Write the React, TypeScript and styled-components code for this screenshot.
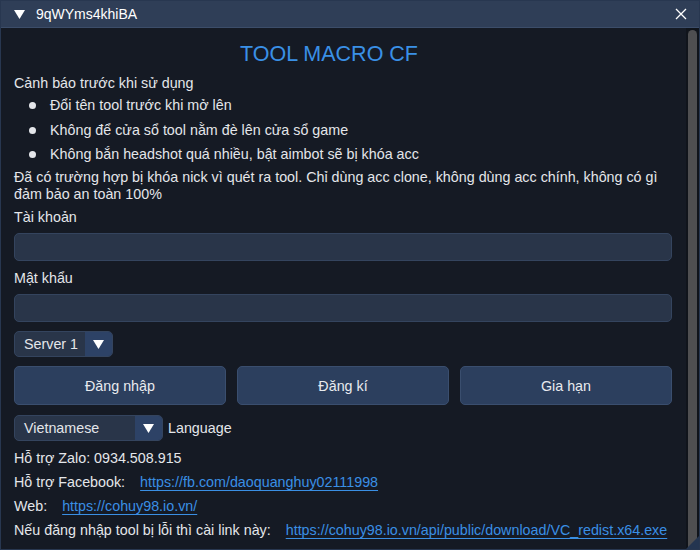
import React from "react";
import styled, { createGlobalStyle } from "styled-components";

const Global = createGlobalStyle`
  html, body {
    margin: 0;
    padding: 0;
    background: #151a24;
  }
  * {
    box-sizing: border-box;
  }
`;

const Window = styled.div`
  position: relative;
  width: 700px;
  height: 550px;
  display: flex;
  flex-direction: column;
  background: #151a24;
  border: 1px solid #283750;
  overflow: hidden;
  font-family: "Liberation Sans", Arial, sans-serif;
  font-size: 14.3px;
  color: #e4e6ea;
`;

const TitleBar = styled.div`
  height: 27px;
  flex: none;
  display: flex;
  align-items: center;
  gap: 11px;
  padding: 0 12px 0 13px;
  background: #2f3e57;
  border-bottom: 1px solid #3c4d69;
  color: #ffffff;
  font-size: 14px;
`;

const TitleText = styled.div`
  flex: 1;
`;

const Body = styled.div`
  flex: 1;
  display: flex;
  min-height: 0;
`;

const Content = styled.div`
  flex: 1;
  display: flex;
  flex-direction: column;
  padding: 13px 14px 0 13px;
`;

const ScrollTrack = styled.div`
  width: 13px;
  flex: none;
  background: #10141b;
  padding: 2px 2px 0 2px;
`;

const ScrollThumb = styled.div`
  height: 100%;
  border-radius: 5px 5px 0 0;
  background: #4f4f51;
`;

const Heading = styled.div`
  padding-left: 226px;
  font-size: 21.5px;
  line-height: 26px;
  color: #3a90e6;
  margin-bottom: 8px;
`;

const Line = styled.div<{ mt?: number }>`
  line-height: 16px;
  margin-top: ${(p) => p.mt ?? 0}px;
  white-space: nowrap;
`;

const Para = styled.div<{ mt?: number }>`
  line-height: 17px;
  margin-top: ${(p) => p.mt ?? 0}px;
`;

const BulletList = styled.ul`
  list-style: none;
  margin: 0;
  padding: 0;
`;

const Bullet = styled.li<{ mt: number }>`
  position: relative;
  padding-left: 36px;
  line-height: 16px;
  margin-top: ${(p) => p.mt}px;
  &::before {
    content: "";
    position: absolute;
    left: 15px;
    top: 5px;
    width: 7px;
    height: 7px;
    border-radius: 50%;
    background: #e4e6ea;
  }
`;

const Input = styled.div<{ mt: number; h: number }>`
  height: ${(p) => p.h}px;
  margin-top: ${(p) => p.mt}px;
  background: #293549;
  border: 1px solid #34445e;
  border-radius: 5px;
`;

const Combo = styled.div<{ w: number; mt: number }>`
  width: ${(p) => p.w}px;
  height: 26px;
  margin-top: ${(p) => p.mt}px;
  display: flex;
  border: 1px solid #34445e;
  border-radius: 5px;
  overflow: hidden;
  background: #293549;
`;

const ComboValue = styled.div`
  flex: 1;
  padding-left: 9px;
  line-height: 24px;
`;

const ComboArrow = styled.div`
  width: 27px;
  display: flex;
  align-items: center;
  justify-content: center;
  background: #2d4266;
`;

const Row = styled.div<{ mt: number }>`
  display: flex;
  align-items: center;
  gap: 5px;
  margin-top: ${(p) => p.mt}px;
`;

const ButtonRow = styled.div`
  display: grid;
  grid-template-columns: repeat(3, 1fr);
  gap: 11px;
  margin-top: 9px;
`;

const Button = styled.div`
  height: 39px;
  display: flex;
  align-items: center;
  justify-content: center;
  background: #2c3f5e;
  border: 1px solid #3a4e6e;
  border-radius: 5px;
  color: #e8eaee;
`;

const LinkLine = styled.div<{ mt: number }>`
  display: flex;
  gap: 15px;
  line-height: 16px;
  margin-top: ${(p) => p.mt}px;
  white-space: nowrap;
`;

const Link = styled.span`
  color: #3a8fe4;
  text-decoration: underline;
  text-underline-offset: 3px;
`;

const Grip = styled.div`
  position: absolute;
  right: 0;
  bottom: 0;
  width: 0;
  height: 0;
  border-left: 13px solid transparent;
  border-bottom: 13px solid #243550;
`;

const Arrow = () => (
  <svg width="11" height="9" viewBox="0 0 11 9">
    <path d="M0 0 H11 L5.5 9 Z" fill="#ffffff" />
  </svg>
);

const CloseIcon = () => (
  <svg width="12" height="12" viewBox="0 0 12 12">
    <path d="M1 1 L11 11 M11 1 L1 11" stroke="#ffffff" strokeWidth="1.3" />
  </svg>
);

const App = () => {
  return (
    <>
      <Global />
      <Window>
        <TitleBar>
          <Arrow />
          <TitleText>9qWYms4khiBA</TitleText>
          <CloseIcon />
        </TitleBar>
        <Body>
          <Content>
            <Heading>TOOL MACRO CF</Heading>
            <Line>Cảnh báo trước khi sử dụng</Line>
            <BulletList>
              <Bullet mt={6}>Đổi tên tool trước khi mở lên</Bullet>
              <Bullet mt={9}>Không để cửa sổ tool nằm đè lên cửa sổ game</Bullet>
              <Bullet mt={8}>Không bắn headshot quá nhiều, bật aimbot sẽ bị khóa acc</Bullet>
            </BulletList>
            <Para mt={7}>
              Đã có trường hợp bị khóa nick vì quét ra tool. Chỉ dùng acc clone, không dùng acc chính, không có gì đảm bảo an toàn 100%
            </Para>
            <Line mt={6}>Tài khoản</Line>
            <Input mt={8} h={28} />
            <Line mt={9}>Mật khẩu</Line>
            <Input mt={8} h={28} />
            <Combo w={99} mt={9}>
              <ComboValue>Server 1</ComboValue>
              <ComboArrow>
                <Arrow />
              </ComboArrow>
            </Combo>
            <ButtonRow>
              <Button>Đăng nhập</Button>
              <Button>Đăng kí</Button>
              <Button>Gia hạn</Button>
            </ButtonRow>
            <Row mt={10}>
              <Combo w={149} mt={0}>
                <ComboValue>Vietnamese</ComboValue>
                <ComboArrow>
                  <Arrow />
                </ComboArrow>
              </Combo>
              <span>Language</span>
            </Row>
            <Line mt={9}>Hỗ trợ Zalo: 0934.508.915</Line>
            <LinkLine mt={8}>
              <span>Hỗ trợ Facebook:</span>
              <Link>https://fb.com/daoquanghuy02111998</Link>
            </LinkLine>
            <LinkLine mt={8}>
              <span>Web:</span>
              <Link>https://cohuy98.io.vn/</Link>
            </LinkLine>
            <LinkLine mt={8}>
              <span>Nếu đăng nhập tool bị lỗi thì cài link này:</span>
              <Link>https://cohuy98.io.vn/api/public/download/VC_redist.x64.exe</Link>
            </LinkLine>
          </Content>
          <ScrollTrack>
            <ScrollThumb />
          </ScrollTrack>
        </Body>
        <Grip />
      </Window>
    </>
  );
};

export default App;
